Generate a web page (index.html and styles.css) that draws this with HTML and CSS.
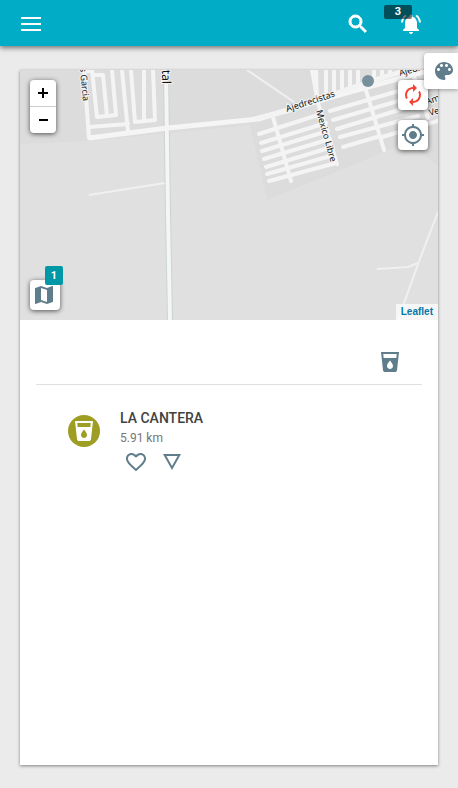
FILE: index.html
```html
<!DOCTYPE html>
<html lang="es">
<head>
<meta charset="utf-8">
<meta name="viewport" content="width=device-width, initial-scale=1">
<title>La Cantera</title>
<link rel="stylesheet" href="styles.css">
</head>
<body>
<svg class="sprite" aria-hidden="true">
  <symbol id="drink" viewBox="0 0 24 24"><path d="M3 2l2.01 18.23C5.13 21.23 5.97 22 7 22h10c1.03 0 1.87-.77 1.99-1.77L21 2H3zm9 17c-1.66 0-3-1.34-3-3 0-2 3-5.400 3-5.400s3 3.400 3 5.400c0 1.660-1.340 3-3 3zm6.330-11H5.670l-.44-4h13.530l-.43 4z"/></symbol>
</svg>
<header class="topbar">
  <button class="bar-button menu" aria-label="Menu"><svg class="icon" viewBox="0 0 24 24"><path d="M2 5h20v2H2zM2 11h20v2H2zM2 17h20v2H2z"/></svg></button>
  <button class="bar-button" aria-label="Buscar"><svg class="icon search-icon" viewBox="0 0 24 24"><path d="M15.500 14h-.79l-.28-.27C15.410 12.590 16 11.110 16 9.500 16 5.910 13.090 3 9.500 3S3 5.910 3 9.500 5.910 16 9.500 16c1.610 0 3.090-.59 4.230-1.570l.27.28v.79l5 4.990L20.490 19l-4.990-5zm-6 0C7.010 14 5 11.990 5 9.500S7.010 5 9.500 5 14 7.010 14 9.500 11.990 14 9.500 14z"/></svg></button>
  <button class="bar-button bell" aria-label="Notificaciones"><svg class="icon" viewBox="0 0 24 24"><path d="M7.580 4.080L6.150 2.650C3.750 4.480 2.170 7.300 2.030 10.500h2c.15-2.650 1.510-4.970 3.550-6.420zM19.970 10.500h2c-.15-3.200-1.730-6.020-4.120-7.850l-1.420 1.430c2.020 1.450 3.390 3.770 3.540 6.420zM18 11c0-3.070-1.640-5.640-4.500-6.320V4c0-.83-.67-1.500-1.500-1.500s-1.500.67-1.500 1.500v.68C7.630 5.360 6 7.920 6 11v5l-2 2v1h16v-1l-2-2v-5zm-6 11c.14 0 .27-.01.4-.04.65-.14 1.180-.58 1.440-1.180.1-.24.15-.5.150-.78h-4c.01 1.100.9 2 2.010 2z"/></svg><span class="bell-count">3</span></button>
</header>
<button class="theme-tab" aria-label="Tema"><svg class="icon" viewBox="0 0 24 24"><path d="M12 3c-4.970 0-9 4.030-9 9s4.030 9 9 9c.83 0 1.500-.67 1.500-1.500 0-.39-.15-.74-.39-1.010-.23-.26-.38-.61-.38-.99 0-.83.67-1.500 1.500-1.500H16c2.760 0 5-2.240 5-5 0-4.420-4.030-8-9-8zm-5.500 9c-.83 0-1.500-.67-1.500-1.500S5.670 9 6.500 9 8 9.670 8 10.500 7.330 12 6.500 12zm3-4C8.670 8 8 7.330 8 6.500S8.670 5 9.500 5s1.500.67 1.500 1.500S10.330 8 9.500 8zm5 0c-.83 0-1.500-.67-1.500-1.500S13.670 5 14.500 5s1.500.67 1.500 1.500S15.330 8 14.500 8zm3 4c-.83 0-1.500-.67-1.500-1.500S16.670 9 17.500 9s1.500.67 1.500 1.500-.67 1.500-1.500 1.500z"/></svg></button>
<main class="card">
  <section class="map" aria-label="Mapa">
    <svg class="map-canvas" viewBox="20 70 418 250" preserveAspectRatio="xMidYMin slice">
      <path class="land" d="M20 70H438V166L407 142 360 162 267 200 250 125 90 141 20 144z"/>
      <g class="tracks">
        <path d="M89 195L165 183M247 70L294 102M438 212L418 264 398 320M377 269L408 267 418 263"/>
      </g>
      <path class="casing" d="M166 70L168 214 170 320"/>
      <g class="streets">
        <path d="M84 70L89 138M92 70L97 117 116 115 112 70M93 75H103L107 116M84 71H92M122 70L128 132M89 127L128 124M131 70L135 122 155 120 153 70M144 70V121"/>
        <path d="M273 117L291 181M312 70L318 103 337 164M316 70L317 100M365 87L384 150M412 71L428 118"/>
        <path d="M259 134L321 114M261 143L326 123M262 151L328 131M264 159L330 139M266 167L332 147M267 174L334 155M269 181L336 163"/>
        <path d="M330 111L412 87M333 120L412 97M337 129L412 106M340 137L418 116M343 147L377 137M382 137L438 121"/>
        <path d="M326 70V92M334 70V90M342 70V88M350 70V86M358 70V84M374 70V80M382 70V78M390 70V75"/>
      </g>
      <path class="road" d="M89 138L168 128 258 119 328 98 438 68"/>
      <path class="street-wide" d="M254 119L290 110 365 83 410 69"/>
      <path class="road main" d="M166 70L168 214 170 320"/>
      <g class="names">
        <text transform="translate(80 68) rotate(85)">s Garcia</text>
        <text class="big" transform="translate(162 70) rotate(89)">tal</text>
        <text transform="translate(287 112) rotate(-18)">Ajedrecistas</text>
        <text transform="translate(316 111) rotate(74)">Mexico Libre</text>
        <text transform="translate(400 76) rotate(-15)">Ajedrecistas</text>
        <text transform="translate(427 105) rotate(-20)">Am</text>
        <text transform="translate(430 116) rotate(-17)">Ve</text>
      </g>
      <circle class="spot" cx="368" cy="81" r="6"/>
    </svg>
    <div class="zoom-control"><button aria-label="Acercar"><svg viewBox="0 0 26 26"><path d="M8 13H18M13 8V18"/></svg></button><button aria-label="Alejar"><svg viewBox="0 0 26 26"><path d="M9 13H18"/></svg></button></div>
    <div class="map-tools">
      <button class="map-button refresh" aria-label="Actualizar"><svg class="icon" viewBox="0 0 24 24"><path d="M12 6v3l4-4-4-4v3c-4.420 0-8 3.580-8 8 0 1.570.46 3.030 1.240 4.260L6.700 14.800c-.45-.83-.7-1.790-.7-2.800 0-3.310 2.690-6 6-6zm6.760 1.740L17.300 9.200c.44.840.7 1.790.7 2.800 0 3.310-2.690 6-6 6v-3l-4 4 4 4v-3c4.420 0 8-3.580 8-8 0-1.570-.46-3.030-1.240-4.260z"/></svg></button>
      <button class="map-button" aria-label="Mi ubicación"><svg class="icon" viewBox="0 0 24 24"><path d="M12 8c-2.210 0-4 1.790-4 4s1.790 4 4 4 4-1.790 4-4-1.790-4-4-4zm8.940 3c-.46-4.170-3.770-7.480-7.940-7.940V1h-2v2.060C6.830 3.520 3.520 6.830 3.060 11H1v2h2.060c.46 4.170 3.770 7.480 7.940 7.940V23h2v-2.060c4.170-.46 7.480-3.770 7.940-7.940H23v-2h-2.060zM12 19c-3.870 0-7-3.130-7-7s3.130-7 7-7 7 3.130 7 7-3.130 7-7 7z"/></svg></button>
    </div>
    <button class="map-button layers" aria-label="Mapas"><svg class="icon" viewBox="0 0 24 24"><path d="M20.500 3l-.16.030L15 5.100 9 3 3.360 4.900c-.21.070-.36.250-.36.480V20.500c0 .28.220.5.500.5l.16-.03L9 18.900l6 2.100 5.640-1.900c.21-.07.36-.25.36-.48V3.500c0-.28-.22-.5-.5-.5zM15 19l-6-2.110V5l6 2.110V19z"/></svg><span class="layer-count">1</span></button>
    <div class="attribution"><a href="#">Leaflet</a></div>
  </section>
  <section class="places">
    <div class="filters"><button aria-label="Agua"><svg class="icon"><use href="#drink"/></svg></button></div>
    <article class="place">
      <div class="avatar"><svg class="icon"><use href="#drink"/></svg></div>
      <div>
        <h2>LA CANTERA</h2>
        <p>5.91 km</p>
        <div class="actions">
          <button aria-label="Favorito"><svg class="icon" viewBox="0 0 24 24"><path d="M16.500 3c-1.740 0-3.410.81-4.500 2.090C10.910 3.810 9.240 3 7.500 3 4.420 3 2 5.420 2 8.500c0 3.780 3.400 6.860 8.550 11.540L12 21.350l1.450-1.320C18.600 15.360 22 12.280 22 8.500 22 5.420 19.580 3 16.500 3zm-4.400 15.550l-.1.100-.1-.1C7.140 14.240 4 11.390 4 8.500 4 6.500 5.500 5 7.500 5c1.540 0 3.040.99 3.570 2.360h1.870C13.460 5.990 14.960 5 16.500 5c2 0 3.500 1.500 3.500 3.500 0 2.890-3.140 5.740-7.900 10.050z"/></svg></button>
          <button aria-label="Detalles"><svg class="icon" viewBox="0 0 24 24"><path d="M3 4l9 16 9-16H3zm3.380 2h11.250L12 16 6.380 6z"/></svg></button>
        </div>
      </div>
    </article>
  </section>
</main>
</body>
</html>
```
FILE: styles.css
```css
* { box-sizing: border-box; }

body {
  margin: 0;
  min-height: 100vh;
  display: flex;
  flex-direction: column;
  background: #ebebeb;
  color: #424242;
  font-family: Roboto, sans-serif;
  position: relative;
  overflow-x: hidden;
}

button {
  border: 0;
  padding: 0;
  background: none;
  color: #607d8b;
  font: inherit;
  cursor: pointer;
}

.sprite { position: absolute; width: 0; height: 0; }

.icon { display: block; width: 24px; height: 24px; fill: currentColor; }

.topbar {
  display: flex;
  align-items: center;
  gap: 29px;
  height: 46px;
  padding: 1px 35px 0 19px;
  background: #00acc6;
  box-shadow: 0 2px 5px rgba(0, 0, 0, .5);
}

.bar-button { position: relative; color: #fff; }
.menu { margin-right: auto; }
.search-icon { stroke: currentColor; stroke-width: 1px; }

.bell-count {
  position: absolute;
  left: -15px;
  top: -7px;
  width: 28px;
  height: 14px;
  border-radius: 2px;
  background: rgba(0, 0, 0, .54);
  color: #fff;
  font-size: 11px;
  font-weight: 700;
  line-height: 14px;
  text-align: center;
}

.theme-tab {
  position: absolute;
  z-index: 3;
  top: 53px;
  right: 0;
  height: 36px;
  padding: 0 2px 0 8px;
  border-radius: 4px 0 0 4px;
  background: #fff;
  box-shadow: 0 1px 4px rgba(0, 0, 0, .35);
}

.card {
  flex: 1;
  margin: 24px 20px 23px;
  background: #fff;
  box-shadow: 0 1px 3px rgba(0, 0, 0, .45);
}

.map { position: relative; height: 250px; overflow: hidden; background: #e0e0e0; }
.map-canvas { display: block; width: 100%; height: 100%; fill: none; }
.land { fill: #dcdcdc; }
.tracks { stroke: #f0f0f0; stroke-width: 2px; }
.streets { stroke: #f4f4f4; stroke-width: 4px; stroke-linecap: round; stroke-linejoin: round; }
.road { stroke: #f5f5f5; stroke-width: 5px; stroke-linejoin: round; }
.main { stroke-width: 4px; }
.street-wide { stroke: #f3f3f3; stroke-width: 5px; }
.casing { stroke: #cbd4d2; stroke-width: 6px; }

.names text {
  fill: #111;
  stroke: #f4f4f4;
  stroke-width: 2px;
  paint-order: stroke;
  font: 9px "Noto Sans", sans-serif;
}

.names .big { font-size: 12px; }
.spot { fill: #78909c; }

.zoom-control {
  position: absolute;
  left: 10px;
  top: 10px;
  width: 26px;
  border-radius: 4px;
  background: #fff;
  box-shadow: 0 1px 5px rgba(0, 0, 0, .65);
}

.zoom-control button { display: block; width: 26px; height: 26px; }
.zoom-control button + button { height: 27px; border-top: 1px solid #ccc; }
.zoom-control svg { display: block; width: 26px; height: 26px; stroke: #000; stroke-width: 2px; }

.map-tools {
  position: absolute;
  top: 10px;
  right: 10px;
  display: flex;
  flex-direction: column;
  gap: 10px;
}

.map-button {
  width: 30px;
  height: 30px;
  padding: 3px;
  border-radius: 4px;
  background: #fff;
  box-shadow: 0 1px 5px rgba(0, 0, 0, .65);
}

.refresh { color: #f44336; }
.layers { position: absolute; left: 10px; bottom: 10px; padding: 2px; }

.layer-count {
  position: absolute;
  left: 15px;
  top: -14px;
  width: 18px;
  height: 19px;
  border-radius: 2px;
  background: #0097a7;
  color: #fff;
  font-size: 11px;
  font-weight: 700;
  line-height: 19px;
  text-align: center;
}

.attribution {
  position: absolute;
  right: 0;
  bottom: 0;
  padding: 0 5px;
  background: rgba(255, 255, 255, .7);
  font: bold 10px/16px "Liberation Sans", sans-serif;
}

.attribution a { color: #0078a8; text-decoration: none; }

.places { padding: 0 16px; }

.filters {
  display: flex;
  justify-content: flex-end;
  padding: 30px 20px 10px;
  border-bottom: 1px solid #e0e0e0;
}

.place { display: flex; gap: 20px; padding: 23px 32px; }

.avatar {
  display: grid;
  place-items: center;
  width: 32px;
  height: 32px;
  margin-top: 7px;
  border-radius: 50%;
  background: #9e9d24;
  color: #fff;
}

h2 { margin: 0; font-size: 14px; font-weight: 500; line-height: 20px; }
p { margin: 0; color: #757575; font-size: 12px; line-height: 20px; }
.actions { display: flex; gap: 12px; padding: 2px 4px 0; }
```
